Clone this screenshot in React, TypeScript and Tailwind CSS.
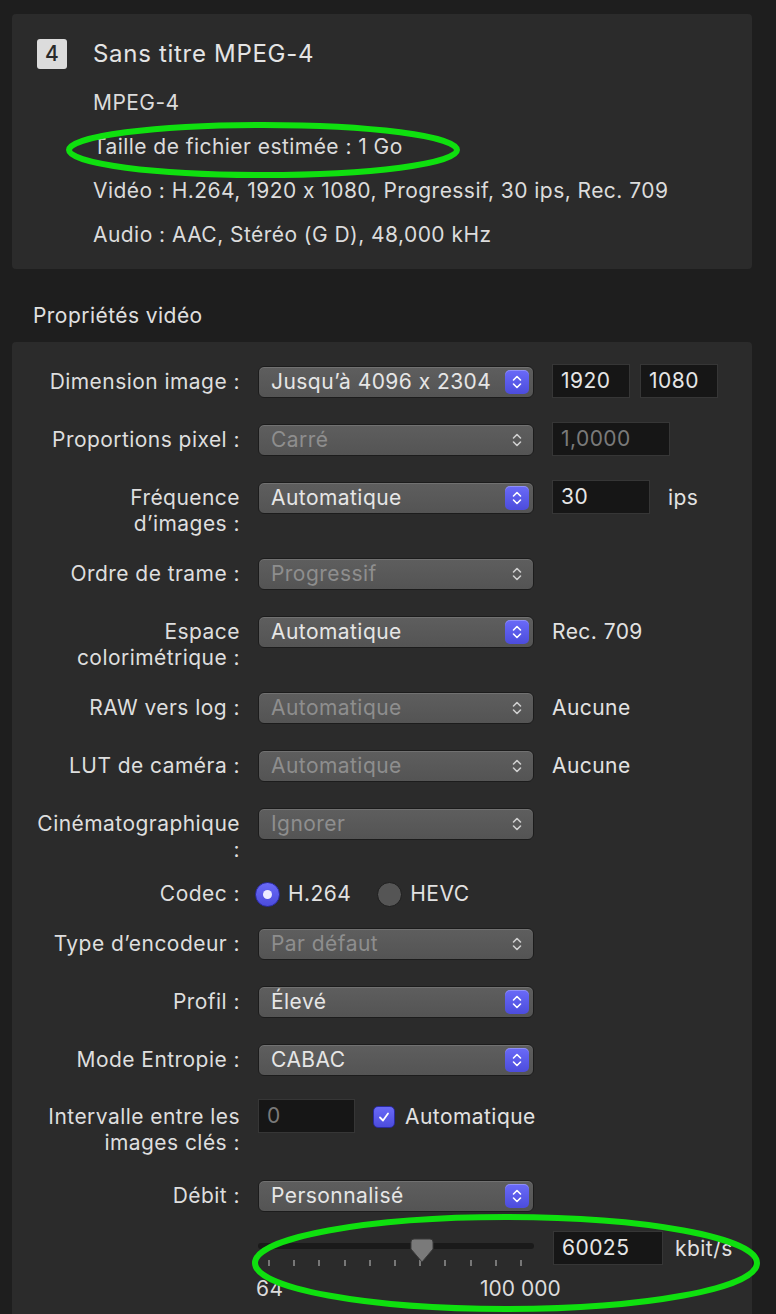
import React from "react";

type PopupProps = {
  value: string;
  disabled?: boolean;
};

const Chevrons = ({ color }: { color: string }) => (
  <svg width="12" height="16" viewBox="0 0 12 16" fill="none">
    <path d="M2.5 6 L6 2.5 L9.5 6" stroke={color} strokeWidth="1.6" strokeLinecap="round" strokeLinejoin="round" />
    <path d="M2.5 10 L6 13.5 L9.5 10" stroke={color} strokeWidth="1.6" strokeLinecap="round" strokeLinejoin="round" />
  </svg>
);

const Popup = ({ value, disabled }: PopupProps) => (
  <div className="flex h-[32px] w-[276px] items-center justify-between rounded-[6px] border border-[#1c1c1c] bg-gradient-to-b from-[#5e5e5e] to-[#545454] pr-[4px] pl-[12px] shadow-[inset_0_1px_0_rgba(255,255,255,0.12)]">
    <span className={disabled ? "text-[#8e8e8e]" : "text-[#e6e6e6]"}>{value}</span>
    {disabled ? (
      <span className="flex h-[24px] w-[24px] items-center justify-center">
        <Chevrons color="#cfcfcf" />
      </span>
    ) : (
      <span className="flex h-[24px] w-[24px] items-center justify-center rounded-[5px] bg-gradient-to-b from-[#6a6af8] to-[#4c4cdc] shadow-[inset_0_1px_0_rgba(255,255,255,0.25)]">
        <Chevrons color="#ffffff" />
      </span>
    )}
  </div>
);

const Field = ({ value, w, dim }: { value: string; w: string; dim?: boolean }) => (
  <div
    className={`-mt-[2px] flex h-[34px] items-center border border-[#363636] bg-[#161616] px-[8px] ${w} ${
      dim ? "text-[#7a7a7a]" : "text-[#e6e6e6]"
    }`}
  >
    {value}
  </div>
);

type RowProps = {
  label: React.ReactNode;
  h: string;
  children: React.ReactNode;
};

const Row = ({ label, h, children }: RowProps) => (
  <div className={`flex items-start ${h}`}>
    <div className="w-[228px] pt-[3px] text-right leading-[26px] text-[#dedede]">{label}</div>
    <div className="ml-[18px] flex h-[32px] items-center gap-[18px]">{children}</div>
  </div>
);

const Side = ({ children }: { children: React.ReactNode }) => (
  <span className="text-[#e2e2e2]">{children}</span>
);

const ticks = Array.from({ length: 11 }, (_, i) => i);

export default function App() {
  return (
    <div
      className="relative min-h-[1314px] w-[776px] overflow-hidden bg-[#1e1e1e] pt-[14px] pr-[24px] pl-[12px] text-[21px] tracking-[0.45px] [font-feature-settings:'calt'_0]"
      style={{ fontFamily: "Inter, 'Noto Sans', sans-serif" }}
    >
      {/* summary card */}
      <div className="rounded-[4px] bg-[#2b2b2b] px-[25px] pt-[25px] pb-[12px]">
        <div className="flex items-center gap-[26px]">
          <div className="flex h-[30px] w-[30px] items-center justify-center rounded-[3px] bg-[#dcdcdc] text-[21px] font-medium tracking-normal text-[#2a2a2a]">
            4
          </div>
          <div className="text-[24px] leading-[30px] tracking-[0.7px] text-[#e4e4e4]">Sans titre MPEG-4</div>
        </div>
        <div className="mt-[12px] pl-[56px] leading-[44px] text-[#dcdcdc]">
          <div>MPEG-4</div>
          <div>Taille de fichier estimée : 1 Go</div>
          <div>Vidéo : H.264, 1920 x 1080, Progressif, 30 ips, Rec. 709</div>
          <div>Audio : AAC, Stéréo (G D), 48,000 kHz</div>
        </div>
      </div>

      <div className="mt-[34px] mb-[13px] pl-[21px] leading-[26px] text-[#e0e0e0]">Propriétés vidéo</div>

      {/* video properties panel */}
      <div className="h-[1000px] rounded-t-[4px] bg-[#2b2b2b] pt-[24px]">
        <Row label="Dimension image :" h="h-[58px]">
          <Popup value="Jusqu’à 4096 x 2304" />
          <div className="flex gap-[10px]">
            <Field value="1920" w="w-[78px]" />
            <Field value="1080" w="w-[78px]" />
          </div>
        </Row>
        <Row label="Proportions pixel :" h="h-[58px]">
          <Popup value="Carré" disabled />
          <Field value="1,0000" w="w-[118px]" dim />
        </Row>
        <Row
          label={
            <>
              Fréquence
              <br />
              d’images :
            </>
          }
          h="h-[76px]"
        >
          <Popup value="Automatique" />
          <Field value="30" w="w-[98px]" />
          <Side>ips</Side>
        </Row>
        <Row label="Ordre de trame :" h="h-[58px]">
          <Popup value="Progressif" disabled />
        </Row>
        <Row
          label={
            <>
              Espace
              <br />
              colorimétrique :
            </>
          }
          h="h-[76px]"
        >
          <Popup value="Automatique" />
          <Side>Rec. 709</Side>
        </Row>
        <Row label="RAW vers log :" h="h-[58px]">
          <Popup value="Automatique" disabled />
          <Side>Aucune</Side>
        </Row>
        <Row label="LUT de caméra :" h="h-[58px]">
          <Popup value="Automatique" disabled />
          <Side>Aucune</Side>
        </Row>
        <Row
          label={
            <>
              Cinématographique
              <br />:
            </>
          }
          h="h-[70px]"
        >
          <Popup value="Ignorer" disabled />
        </Row>
        <Row label="Codec :" h="h-[50px]">
          <div className="-ml-[3px] flex items-center gap-[8px]">
            <span className="flex h-[25px] w-[25px] items-center justify-center rounded-full border border-[#2a2aa0] bg-gradient-to-b from-[#6a6af8] to-[#4c4cdc]">
              <span className="h-[9px] w-[9px] rounded-full bg-[#ececff]" />
            </span>
            <span className="text-[#e2e2e2]">H.264</span>
            <span className="ml-[18px] h-[25px] w-[25px] rounded-full border border-[#1e1e1e] bg-[#555555]" />
            <span className="text-[#e2e2e2]">HEVC</span>
          </div>
        </Row>
        <Row label="Type d’encodeur :" h="h-[58px]">
          <Popup value="Par défaut" disabled />
        </Row>
        <Row label="Profil :" h="h-[58px]">
          <Popup value="Élevé" />
        </Row>
        <Row label="Mode Entropie :" h="h-[57px]">
          <Popup value="CABAC" />
        </Row>
        <Row
          label={
            <>
              Intervalle entre les
              <br />
              images clés :
            </>
          }
          h="h-[79px]"
        >
          <Field value="0" w="w-[97px]" dim />
          <div className="flex items-center gap-[10px]">
            <span className="flex h-[22px] w-[22px] items-center justify-center rounded-[5px] border border-[#2a2aa0] bg-gradient-to-b from-[#6a6af8] to-[#4c4cdc]">
              <svg width="14" height="14" viewBox="0 0 14 14" fill="none">
                <path d="M3 7.5 L6 10.5 L11 3.5" stroke="#ffffff" strokeWidth="1.8" strokeLinecap="round" strokeLinejoin="round" />
              </svg>
            </span>
            <span className="text-[#e2e2e2]">Automatique</span>
          </div>
        </Row>
        <Row label="Débit :" h="h-[54px]">
          <Popup value="Personnalisé" />
        </Row>

        {/* bitrate slider */}
        <div className="ml-[246px] flex items-start gap-[19px]">
          <div className="w-[276px]">
            <div className="relative h-[32px]">
              <div className="absolute top-[9px] right-0 left-0 h-[6px] rounded-full bg-[#1a1a1a]" />
              <div className="absolute top-[26px] right-[12px] left-[10px] flex justify-between">
                {ticks.map((t) => (
                  <span key={t} className="h-[6px] w-[2px] bg-[#777777]" />
                ))}
              </div>
              <svg className="absolute top-[4px] left-[152px]" width="24" height="26" viewBox="0 0 24 26">
                <path d="M4 1 H20 Q23 1 23 4 V11 L12 24 L1 11 V4 Q1 1 4 1 Z" fill="#7a7a7a" stroke="#3a3a3a" strokeWidth="1" />
              </svg>
            </div>
            <div className="relative mt-[10px] h-[26px] leading-[26px] whitespace-nowrap text-[#dcdcdc]">
              <span className="absolute left-[-2px]">64</span>
              <span className="absolute left-[222px] tracking-normal">100 000</span>
            </div>
          </div>
          <div className="-mt-[1px] flex items-center gap-[12px]">
            <Field value="60025" w="w-[110px]" />
            <Side>kbit/s</Side>
          </div>
        </div>
      </div>

      {/* annotation ellipses */}
      <svg className="pointer-events-none absolute top-0 left-0" width="776" height="1314">
        <ellipse cx="263" cy="150" rx="194" ry="25" fill="none" stroke="#0fe00f" strokeWidth="6" />
        <ellipse cx="506" cy="1263" rx="251" ry="46" fill="none" stroke="#0fe00f" strokeWidth="6" />
      </svg>
    </div>
  );
}
